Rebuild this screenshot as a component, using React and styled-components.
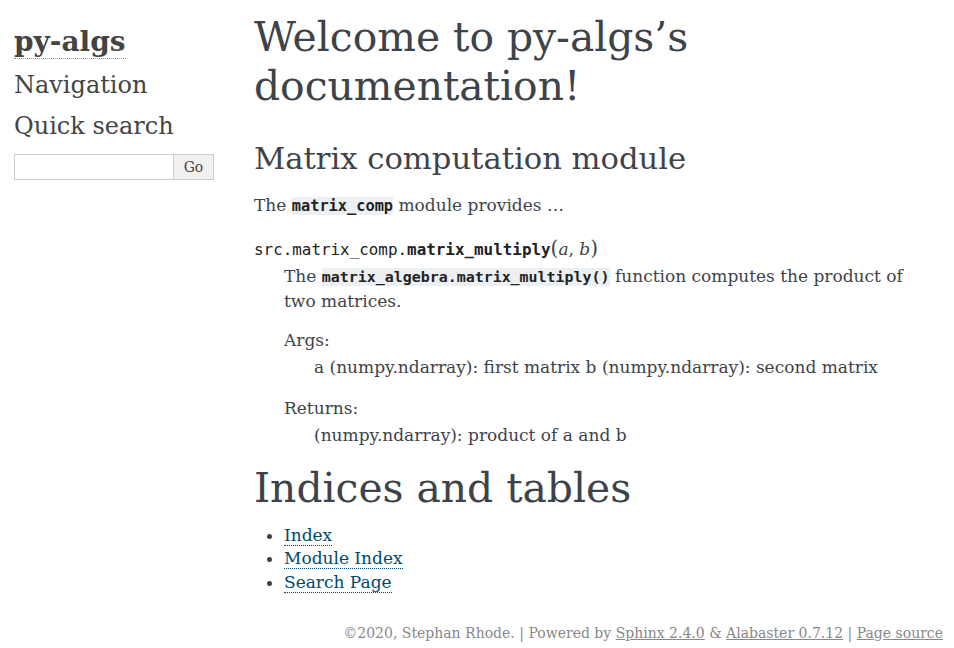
import React from "react";
import styled, { createGlobalStyle } from "styled-components";

const GlobalStyle = createGlobalStyle`
  body {
    margin: 0;
    background: #fff;
    font-family: "DejaVu Serif", Georgia, serif;
    font-size: 17px;
    color: #3e4349;
  }
`;

const mono = `"Consolas", "Menlo", "DejaVu Sans Mono", monospace`;

const Document = styled.div`
  display: flex;
  padding: 12px 11px 0 14px;
`;

const Sidebar = styled.aside`
  width: 200px;
  flex: none;
  padding-top: 9px;
  font-size: 14px;
  line-height: 1.5;
`;

const Logo = styled.h1`
  margin: 0 0 4px;
  font-size: 28px;
  line-height: 42px;
  font-weight: bold;
  a {
    color: #444;
    text-decoration: none;
    border-bottom: 1px dotted #999;
  }
`;

const SideTitle = styled.h3`
  margin: 0 0 5px;
  font-size: 24px;
  line-height: 36px;
  font-weight: normal;
  color: #444;
`;

const SearchForm = styled.form`
  display: flex;
  margin-top: 10px;
`;

const SearchInput = styled.input`
  width: 160px;
  height: 26px;
  box-sizing: border-box;
  border: 1px solid #ccc;
  padding: 2px;
  font-size: 14px;
  outline: none;
`;

const GoButton = styled.button`
  width: 40px;
  height: 26px;
  box-sizing: border-box;
  border: 1px solid #ccc;
  border-left: none;
  background: #f2f1ef;
  color: #444;
  font-family: "DejaVu Serif", serif;
  font-size: 14px;
  padding: 0;
`;

const Main = styled.main`
  flex: 1;
  max-width: 660px;
  margin-left: 40px;
  padding-top: 1px;
  line-height: 1.4;
`;

const H1 = styled.h1`
  margin: 0 0 10px;
  font-size: 40.8px;
  line-height: 49px;
  font-weight: normal;
  color: #3e4349;
`;

const H2 = styled.h2`
  margin: 29px 0 10px;
  font-size: 30.6px;
  line-height: 37px;
  font-weight: normal;
  color: #3e4349;
`;

const P = styled.p`
  margin: ${(p) => (p.$flush ? "0 0 14px" : "17px 0")};
  line-height: ${(p) => (p.$flush ? "25px" : "23.8px")};
`;

const Code = styled.code`
  font-family: ${mono};
  font-size: ${(p) => (p.$small ? "14.95px" : "15.3px")};
  line-height: 1;
  font-weight: bold;
  background: #ecf0f3;
  color: #222;
`;

const Sig = styled.dt`
  padding-top: 2px;
  line-height: 24px;
  font-family: ${mono};
  font-size: 15.9px;
  color: #222;
`;

const SigName = styled.span`
  font-weight: bold;
`;

const SigParams = styled.span`
  font-family: "DejaVu Serif", serif;
  font-size: 17px;
  color: #3e4349;
  em {
    font-style: italic;
  }
`;

const Paren = styled.span`
  font-size: 20px;
  line-height: 1;
`;

const Dl = styled.dl`
  margin: 0 0 15px;
`;

const Dd = styled.dd`
  margin: 2px 0 10px 30px;
`;

const Field = styled.dl`
  margin: 0 0 17px;
  dt {
    line-height: 24px;
  }
`;

const FieldBody = styled.dd`
  margin: 3px 0 17px 30px;
  line-height: 24px;
`;

const List = styled.ul`
  margin: 11px 0 10px 30px;
  padding: 0;
  li {
    line-height: 23.6px;
  }
`;

const Link = styled.a`
  color: #004b6b;
  text-decoration: none;
  border-bottom: 1px dotted #004b6b;
`;

const Footer = styled.footer`
  padding: 20px 11px 20px 0;
  text-align: right;
  font-family: "DejaVu Serif", serif;
  font-size: 14px;
  color: #888;
  a {
    color: #888;
  }
`;

export default function App() {
  return (
    <>
      <GlobalStyle />
      <Document>
        <Sidebar>
          <Logo>
            <a href="#">py-algs</a>
          </Logo>
          <SideTitle>Navigation</SideTitle>
          <SideTitle>Quick search</SideTitle>
          <SearchForm onSubmit={(e) => e.preventDefault()}>
            <SearchInput type="text" />
            <GoButton type="submit">Go</GoButton>
          </SearchForm>
        </Sidebar>
        <Main>
          <H1>Welcome to py-algs’s documentation!</H1>
          <H2>Matrix computation module</H2>
          <P>
            The <Code>matrix_comp</Code> module provides …
          </P>
          <Dl>
            <Sig>
              src.matrix_comp.<SigName>matrix_multiply</SigName>
              <SigParams>
                <Paren>(</Paren>
                <em>a</em>, <em>b</em>
                <Paren>)</Paren>
              </SigParams>
            </Sig>
            <Dd>
              <P $flush>
                The <Code $small>matrix_algebra.matrix_multiply()</Code> function computes the product of
                two matrices.
              </P>
              <Field>
                <dt>Args:</dt>
                <FieldBody>a (numpy.ndarray): first matrix b (numpy.ndarray): second matrix</FieldBody>
                <dt>Returns:</dt>
                <FieldBody>(numpy.ndarray): product of a and b</FieldBody>
              </Field>
            </Dd>
          </Dl>
          <H1>Indices and tables</H1>
          <List>
            <li>
              <Link href="#">Index</Link>
            </li>
            <li>
              <Link href="#">Module Index</Link>
            </li>
            <li>
              <Link href="#">Search Page</Link>
            </li>
          </List>
        </Main>
      </Document>
      <Footer>
        ©2020, Stephan Rhode. | Powered by <a href="#">Sphinx 2.4.0</a> &amp;{" "}
        <a href="#">Alabaster 0.7.12</a> | <a href="#">Page source</a>
      </Footer>
    </>
  );
}
